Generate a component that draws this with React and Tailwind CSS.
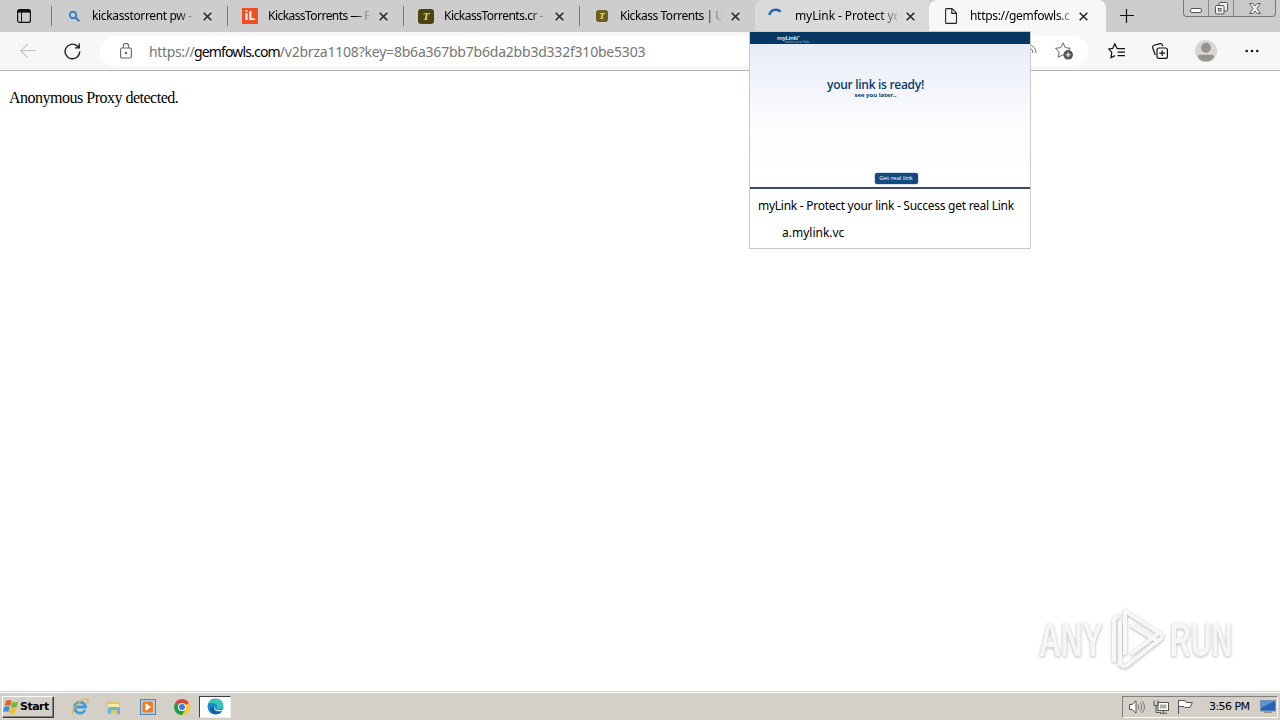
import React from 'react'

const tabs = [
  { title: 'kickasstorrent pw -', icon: 'search', tracking: 'tracking-[-0.35px]' },
  { title: 'KickassTorrents — F', icon: 'il', tracking: 'tracking-[-0.55px]' },
  { title: 'KickassTorrents.cr -', icon: 'kat', tracking: 'tracking-[-0.5px]' },
  { title: 'Kickass Torrents | U', icon: 'katSmall', tracking: 'tracking-[-0.45px]' }
]

const quickLaunch = ['ie', 'folder', 'media', 'chrome']

function CloseIcon() {
  return (
    <svg className="w-[9px] h-[9px] shrink-0" viewBox="0 0 9 9" stroke="#222" strokeWidth="1.5">
      <path d="M.7.7l7.6 7.6M8.3.7L.7 8.3" />
    </svg>
  )
}

function TabIcon({ type }) {
  switch (type) {
    case 'search':
      return (
        <svg className="w-4 h-4" viewBox="0 0 16 16" fill="none">
          <rect x="2" y="2" width="12" height="12" rx="3" fill="#c3d0dc" />
          <circle cx="7" cy="7" r="3.2" stroke="#477cae" strokeWidth="1.9" />
          <path d="M9.5 9.5l3.8 3.8" stroke="#477cae" strokeWidth="2.2" />
        </svg>
      )
    case 'il':
      return (
        <div className="w-4 h-4 bg-[#f04e23] text-white text-[12px] leading-4 font-bold text-center font-['Open_Sans',sans-serif]">
          iL
        </div>
      )
    case 'kat':
      return (
        <div className="w-4 h-[15px] rounded-[3px] bg-[#4b4412] text-[#e9d77b] text-[11px] leading-[15px] font-bold italic text-center font-['Liberation_Serif',serif]">
          T
        </div>
      )
    case 'katSmall':
      return (
        <div className="w-3 h-3 mx-0.5 rounded-[3px] bg-[#6b5d1c] text-[#efe08c] text-[9px] leading-3 font-bold italic text-center font-['Liberation_Serif',serif]">
          T
        </div>
      )
    case 'loading':
      return (
        <svg className="w-4 h-4" viewBox="0 0 16 16" fill="none">
          <path d="M2.3 7C3.500 1.500 10 .2 13.800 3.600" stroke="#2867ad" strokeWidth="2.400" />
        </svg>
      )
    default:
      return (
        <svg className="w-4 h-4" viewBox="0 0 16 16" fill="none" stroke="#222" strokeWidth="1.1">
          <path d="M2.6 1.6Q2.6.6 3.6.6H9l4.5 4.6v9.2q0 1-1 1h-9q-.9 0-.9-1zM8.8.8v4.6h4.5" />
        </svg>
      )
  }
}

function TabBar() {
  return (
    <div className="flex h-8 bg-[#cdcdcd] text-[12px]">
      <div className="w-[51px] flex items-center pl-[17px]">
        <svg className="w-[14px] h-[14px]" viewBox="0 0 14 14" fill="none" stroke="#111">
          <rect x=".6" y=".6" width="12.8" height="12.8" rx="2" strokeWidth="1.2" />
          <path d="M1 2.2h12" strokeWidth="2.8" />
          <path d="M4.5 3v10" strokeWidth="1" />
        </svg>
      </div>
      {tabs.map((tab) => (
        <div key={tab.title} className="w-44 flex items-center">
          <div className="w-px h-5 bg-[#777]"></div>
          <div className="w-4 ml-[14px]">
            <TabIcon type={tab.icon} />
          </div>
          <div
            className={`w-[103px] ml-[10px] mr-2 whitespace-nowrap ${tab.tracking} [mask-image:linear-gradient(to_right,black_84%,transparent_100%)]`}
          >
            {tab.title}
          </div>
          <CloseIcon />
        </div>
      ))}
      <div className="w-[174px] flex items-center bg-[#dadada] rounded-tl-lg">
        <div className="w-4 ml-[12px]">
          <TabIcon type="loading" />
        </div>
        <div className="w-[102px] ml-[12px] mr-[9px] whitespace-nowrap tracking-[-0.1px] [mask-image:linear-gradient(to_right,black_82%,transparent_105%)]">
          myLink - Protect yo
        </div>
        <CloseIcon />
      </div>
      <div className="w-[177px] flex items-center bg-[#f7f7f7] rounded-t-lg">
        <div className="w-4 ml-[14px]">
          <TabIcon type="page" />
        </div>
        <div className="w-[101px] ml-[11px] mr-[8px] whitespace-nowrap tracking-[-0.3px] [mask-image:linear-gradient(to_right,black_86%,transparent_106%)]">
          https://gemfowls.c
        </div>
        <CloseIcon />
      </div>
      <svg className="w-[14px] h-[14px] mt-[9px] ml-[14px]" viewBox="0 0 14 14" stroke="#111" strokeWidth="1.2">
        <path d="M0 6.500h14M6.500 0v14" />
      </svg>
      <WindowButtons />
    </div>
  )
}

function WindowButtons() {
  return (
    <div className="flex w-[93px] h-[17px] ml-[49px] border border-t-0 border-[#777] rounded-b-[4px] bg-[#c9c9c9]">
      <div className="w-[25px] border-r border-[#888] flex items-end justify-center pb-[3px]">
        <div className="w-3 h-[5px] rounded-[2px] border border-[#555] bg-white"></div>
      </div>
      <div className="w-[25px] border-r border-[#888] flex items-center justify-center">
        <svg className="w-[13px] h-[13px]" viewBox="0 0 13 13" fill="#eee" stroke="#555">
          <rect x="4" y=".5" width="8.5" height="8.5" rx="1" />
          <rect x=".5" y="3.5" width="8.5" height="8.5" rx="1" />
          <rect x="3.5" y="6.5" width="2.5" height="2.5" />
        </svg>
      </div>
      <div className="flex-1 flex items-center justify-center">
        <svg className="w-3 h-[11px]" viewBox="0 0 12 11" fill="#eee" stroke="#555" strokeWidth=".9">
          <path d="M.6.5h3.2L6 3 8.2.5h3.2L7.9 5.5l3.5 5H8.2L6 8l-2.2 2.5H.6l3.5-5z" />
        </svg>
      </div>
    </div>
  )
}

function AddressBar() {
  return (
    <div className="h-[39px] flex items-center bg-[#f7f7f7] border-b border-[#b5b5b5]">
      <svg className="w-4 h-4 ml-5" viewBox="0 0 16 16" fill="none" stroke="#c5c5c5" strokeWidth="1.2">
        <path d="M16 7.7H1M7.5 1L.8 7.7l6.7 6.8" />
      </svg>
      <svg className="w-[17px] h-[17px] ml-7" viewBox="0 0 17 17" fill="none" stroke="#222" strokeWidth="1.4">
        <path d="M15.7 8.5a7.3 7.3 0 1 1-2.6-5.6l2 1.8M15.3.5v4.4h-4.4" />
      </svg>
      <div className="w-[988px] h-[30px] ml-[19px] rounded-full bg-white flex items-center pl-5">
        <svg className="w-3 h-4" viewBox="0 0 12 16" fill="none" stroke="#666" strokeWidth="1.1">
          <rect x=".6" y="5" width="10.8" height="10" rx="1.5" />
          <path d="M3.3 5V3.2a2.7 2.7 0 0 1 5.4 0V5" />
          <circle cx="6" cy="10" r=".7" fill="#666" />
        </svg>
        <div className="w-[496px] ml-[17px] whitespace-nowrap text-[14px] text-[#767676] flex">
          <span className="w-[45px] tracking-[-0.35px]">https://</span>
          <span className="w-[87px] text-black tracking-[-0.85px]">gemfowls.com</span>
          <span className="tracking-[-0.21px]">/v2brza1108?key=8b6a367bb7b6da2bb3d332f310be5303</span>
        </div>
        <svg className="w-[14px] h-4 ml-[378px]" viewBox="0 0 14 16" fill="none" stroke="#666">
          <path d="M5 1c5 1 8 5 8 9M5 4c3 1 5 3 5 6M5 8v5" />
        </svg>
        <svg className="w-[18px] h-[18px] ml-[18px]" viewBox="0 0 18 18" fill="none">
          <path d="M8 .8l2.2 4.8 5.2.7-3.8 3.7.8 5.2L8 12.8l-4.7 2.4.9-5.2L.6 6.3l5.2-.7z" stroke="#666" />
          <circle cx="13.2" cy="12.8" r="4.8" fill="#555" />
          <path d="M10.8 12.8h4.8M13.2 10.4v4.8" stroke="#fff" />
        </svg>
      </div>
      <svg className="w-[17px] h-4 ml-5" viewBox="0 0 17 16" fill="none" stroke="#111" strokeWidth="1.2">
        <path d="M10 5.5H9L6.8.8 4.7 5.4l-4 .6 3.1 3.4-.8 5.3 4-2.1M9.5 5.7H17M9.5 9.2H17M9.5 12.6H17" />
      </svg>
      <svg className="w-4 h-4 ml-[27px]" viewBox="0 0 16 16" fill="none" stroke="#111" strokeWidth="1.2">
        <rect x="5" y="5" width="10.4" height="10.4" rx="2" />
        <path d="M10.2 7.3v5.8M7.3 10.2h5.8M3.3 12L.8 5.2Q.2 3 2 2.2L8 .7q1.8-.3 2.3 1.3l.5 1.3" />
      </svg>
      <svg className="w-[22px] h-[22px] ml-[27px]" viewBox="0 0 22 22">
        <circle cx="11" cy="11" r="11" fill="#d8d6d4" />
        <circle cx="11" cy="7.8" r="5" fill="#979391" />
        <path d="M3 16.7q0-2 2.2-2h11.6q2.2 0 2.2 2c-1 3-4 4.8-8 4.8s-7-1.8-8-4.8z" fill="#979391" />
      </svg>
      <svg className="w-[14px] h-1 ml-[28px]" viewBox="0 0 14 4" fill="#111">
        <circle cx="1.7" cy="2" r="1.3" />
        <circle cx="7" cy="2" r="1.3" />
        <circle cx="12.3" cy="2" r="1.3" />
      </svg>
    </div>
  )
}

// Hover card of the loading tab, lies over the toolbar and the page
function TabPreview() {
  return (
    <div className="absolute left-[749px] top-[31px] w-[282px] h-[218px] bg-white border border-[#c9c9c9]">
      <div className="h-3 bg-[#073763] pl-[27px] pt-[3px] text-white font-['Open_Sans',sans-serif]">
        <div className="flex items-center text-[6px] leading-[6px] font-semibold tracking-[-0.2px]">
          myLink<span className="w-[3px] h-[4px] border-t border-l border-[#7d9ab8]"></span>
        </div>
        <div className="pl-2 text-[3px] leading-[3px] text-[#b5c5d5] whitespace-nowrap">protect your links</div>
      </div>
      <div className="h-[143px] bg-linear-to-b from-[#e8ecf8] via-[#fdfdff] via-60% to-white flex flex-col items-center text-[#0b3b69] font-['Open_Sans',sans-serif]">
        <div className="mt-[33px] mr-[29px] text-[12px] leading-[15px] font-semibold tracking-[-0.3px]">
          your link is ready!
        </div>
        <div className="mr-[29px] text-[6px] leading-[7px] font-bold">see you later..</div>
        <div className="mt-[74px] ml-[12px] w-[43px] h-[11px] rounded-[2px] bg-[#124a80] text-white text-[6px] leading-[11px] text-center shadow-[0_0_2px_#6c8fb0]">
          Get real link
        </div>
      </div>
      <div className="h-[2px] bg-[#3b4868]"></div>
      <div className="pl-[8px] pt-[9px] text-[12px] leading-4 whitespace-nowrap tracking-[-0.27px] word-spacing-normal">
        myLink - Protect your link - Success get real Link
      </div>
      <div className="pl-[32px] pt-[10px] text-[12px] leading-[17px]">a.mylink.vc</div>
    </div>
  )
}

function Watermark() {
  return (
    <div className="flex items-center mr-[45px] mb-[20px] text-[48px] leading-[62px] font-bold text-[#f6f6f6] font-['Liberation_Sans',sans-serif] [filter:drop-shadow(0_1px_1.5px_#b5b5b5)]">
      <div className="w-[65px] pt-0.5">
        <div className="w-max origin-left scale-x-[0.63]">ANY</div>
      </div>
      <svg className="w-[60px] h-[62px] ml-1" viewBox="0 0 60 62" fill="none" stroke="#f7f7f7" strokeWidth="4">
        <path d="M6 54V11l6-4M17 47V3l39 25M23 17l28 17M55 29L17 59M51 25L23 46M12 14v42l5 3" />
      </svg>
      <div className="w-[65px] ml-[2px] pt-0.5">
        <div className="w-max origin-left scale-x-[0.6]">RUN</div>
      </div>
    </div>
  )
}

function LaunchIcon({ type }) {
  switch (type) {
    case 'ie':
      return (
        <svg className="w-[18px] h-[18px]" viewBox="0 0 18 18" fill="none">
          <path d="M14 12a5.5 5.5 0 1 1 .5-3H5" stroke="#3c9fda" strokeWidth="2.8" />
          <path d="M2 16C-.5 12 12-2 16.5 1.5c1 1 .5 3-.5 4.5" stroke="#e3b53c" strokeWidth="1.3" />
        </svg>
      )
    case 'folder':
      return (
        <svg className="w-[18px] h-[18px]" viewBox="0 0 18 18">
          <path d="M2 3h5l1 1h7v11H2z" fill="#dfc56b" />
          <path d="M3 6h11v6H3z" fill="#f8e9a5" />
          <path d="M3 16v-5q0-2 2-2h8q2 0 2 2v5h-3v-4H6v4z" fill="#67b4d8" />
        </svg>
      )
    case 'media':
      return (
        <svg className="w-[18px] h-[18px]" viewBox="0 0 18 18">
          <rect x="1.5" y="1.5" width="15" height="15" fill="#acd0eb" stroke="#4d87b8" />
          <rect x="3.5" y="3.5" width="10.5" height="11" rx="2" fill="#f07c18" />
          <path d="M6.5 5l5.5 4-5.500 4z" fill="#fff" />
        </svg>
      )
    case 'chrome':
      return (
        <svg className="w-[18px] h-[18px]" viewBox="0 0 18 18">
          <circle cx="9" cy="9" r="8" fill="#f5c928" />
          <path d="M9 9L2.1 5a8 8 0 0 1 13.8 0z" fill="#db4437" />
          <path d="M9 9L2.1 5A8 8 0 0 0 9 17l3-5z" fill="#219a52" />
          <circle cx="9" cy="9" r="4" fill="#fff" />
          <circle cx="9" cy="9" r="3" fill="#3979e8" />
        </svg>
      )
    default:
      return (
        <svg className="w-[17px] h-[17px]" viewBox="0 0 17 17">
          <circle cx="8.5" cy="8.5" r="8" fill="#168bd0" />
          <path d="M1 6C3 0 14-1 16 6c1 4-3 6-6 5 2-4-4-8-9-5z" fill="#3bc6b0" />
          <path d="M7 8c-1 5 3 7 8 5-3 5-11 4-12-1 0-3 2-4 4-4z" fill="#1460a8" />
          <path d="M8 8c-1 3 2 5 7 4l2-2v3l-3 0c-5 1-8-2-6-5z" fill="#fff" />
        </svg>
      )
  }
}

function Taskbar() {
  return (
    <div className="h-[29px] border-t border-[#d4d0c8] bg-white pt-px">
      <div className="h-[27px] bg-[#d4d0c8] flex items-center">
        <div className="w-[52px] h-[22px] ml-[2px] flex items-center border border-t-white border-l-white border-r-[#404040] border-b-[#404040] shadow-[inset_-1px_-1px_#808080]">
          <svg className="w-4 h-4" viewBox="0 0 16 16">
            <path d="M3 2q3-2 5.5 0L7 7Q4 5.5 1.5 7z" fill="#e65c28" />
            <path d="M9.2 2.5q3 2 6 .3L13.6 8q-3 1.5-6-.3z" fill="#76b82e" />
            <path d="M1.3 8q3-1.5 5.5.2L5.3 13Q3 11.5 0 13z" fill="#3b88d6" />
            <path d="M7.5 8.8q3 1.8 6 .2L12 14q-3 1.5-6-.4z" fill="#f5bd27" />
          </svg>
          <span className="ml-px pt-0.5 text-[11px] font-bold tracking-[-0.5px] font-['DejaVu_Sans',sans-serif]">Start</span>
        </div>
        <div className="flex gap-4 ml-[17px]">
          {quickLaunch.map((type) => (
            <LaunchIcon key={type} type={type} />
          ))}
        </div>
        <div className="w-8 h-[22px] ml-[8px] flex items-center justify-center bg-white border border-t-[#404040] border-l-[#404040] border-[#eee]">
          <LaunchIcon type="edge" />
        </div>
        <div className="w-[156px] h-[22px] ml-auto mr-[2px] flex items-center border border-t-[#808080] border-l-[#808080] border-r-white border-b-white">
          <svg className="w-4 h-[14px] ml-[6px]" viewBox="0 0 16 14" fill="none" stroke="#777">
            <path d="M.6 4.5H3L7 .8v12.4L3 9.5H.6z" fill="#fff" stroke="#555" />
            <path d="M9 4.5q2 2.5 0 5M11 2.7q3.5 4.3 0 8.6M13 1q5 6 0 12" />
          </svg>
          <svg className="w-4 h-[14px] ml-2" viewBox="0 0 16 14" fill="#fff" stroke="#555">
            <rect x="5" y="2.5" width="10.5" height="8" />
            <rect x="7" y="4.5" width="6.5" height="4" fill="#aaa" stroke="none" />
            <path d="M10.5 10.5v2.5M7 13.3h7M1 .5v5h4v-5M3 5.5v7h5" fill="none" />
          </svg>
          <svg className="w-4 h-[15px] ml-2" viewBox="0 0 16 15" fill="#fff" stroke="#555">
            <path d="M1.5 15V.8M1.8 1.5h6l1.5 2h6L13 8.5H8L7 7.5H1.8" />
          </svg>
          <span className="w-[40px] ml-[16px] mr-px pt-px text-[11px] whitespace-nowrap tracking-[-0.55px] font-['DejaVu_Sans',sans-serif]">3:56 PM</span>
          <svg className="w-4 h-[13px] ml-[10px]" viewBox="0 0 16 13">
            <rect x=".5" y=".5" width="15" height="10.5" fill="#2860b4" stroke="#7895b9" />
            <path d="M1 1h14L1 8z" fill="#5a91d7" />
            <path d="M4 12.2h8" stroke="#777" />
          </svg>
        </div>
      </div>
    </div>
  )
}

function App() {
  return (
    <div className="relative w-[1280px] h-[720px] overflow-hidden flex flex-col bg-white text-black font-['Noto_Sans',sans-serif]">
      <TabBar />
      <AddressBar />
      <div className="flex-1 flex flex-col justify-between items-start">
        <p className="ml-[9px] mt-4 text-[16px] leading-[22px] tracking-[-0.5px] font-['Liberation_Serif',serif]">
          Anonymous Proxy detected.
        </p>
        <div className="self-end">
          <Watermark />
        </div>
      </div>
      <Taskbar />
      <TabPreview />
    </div>
  )
}

export default App
